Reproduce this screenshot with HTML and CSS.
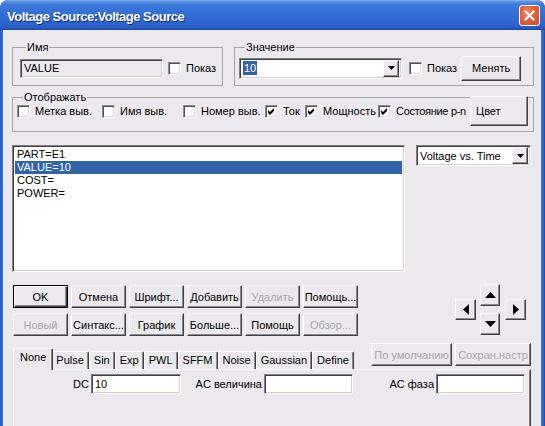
FILE: index.html
```html
<!DOCTYPE html>
<html>
<head>
<meta charset="utf-8">
<link rel="stylesheet" href="styles.css">
</head>
<body>
<div class="window">
  <div class="titlebar">
    <span class="title">Voltage Source:Voltage Source</span>
    <span class="close"><svg width="13" height="13" viewBox="0 0 13 13"><path d="M2.5 2.5 L10.5 10.5 M10.5 2.5 L2.5 10.5" stroke="#fff" stroke-width="2.2" stroke-linecap="square"/></svg></span>
  </div>
  <div class="client">
    <div class="row1">
      <fieldset class="grp grp-name">
        <legend>Имя</legend>
        <div class="grp-row">
          <div class="field field-ro">VALUE</div>
          <label class="cb"><span class="box"></span>Показ</label>
        </div>
      </fieldset>
      <fieldset class="grp grp-value">
        <legend>Значение</legend>
        <div class="grp-row">
          <div class="combo combo-value">
            <span class="combo-text"><span class="hl">10</span></span>
            <span class="combo-btn"><svg width="7" height="4" viewBox="0 0 7 4"><polygon points="0,0 7,0 3.5,4" fill="#000"/></svg></span>
          </div>
          <label class="cb cb-value"><span class="box"></span>Показ</label>
          <span class="btn btn-change">Менять</span>
        </div>
      </fieldset>
    </div>

    <fieldset class="grp grp-show">
      <legend>Отображать</legend>
      <div class="show-row">
        <label class="cb"><span class="box"></span>Метка выв.</label>
        <label class="cb"><span class="box"></span>Имя выв.</label>
        <label class="cb"><span class="box"></span>Номер выв.</label>
        <label class="cb"><span class="box"><svg width="9" height="9" viewBox="0 0 9 9"><polygon points="1,3 3,5 7,1 7,4 3,8 1,6" fill="#000"/></svg></span>Ток</label>
        <label class="cb"><span class="box"><svg width="9" height="9" viewBox="0 0 9 9"><polygon points="1,3 3,5 7,1 7,4 3,8 1,6" fill="#000"/></svg></span>Мощность</label>
        <label class="cb tight"><span class="box"><svg width="9" height="9" viewBox="0 0 9 9"><polygon points="1,3 3,5 7,1 7,4 3,8 1,6" fill="#000"/></svg></span>Состояние p-n</label>
        <span class="btn btn-color">Цвет</span>
      </div>
    </fieldset>

    <div class="row3">
      <div class="list">
        <div class="item">PART=E1</div>
        <div class="item sel">VALUE=10</div>
        <div class="item">COST=</div>
        <div class="item">POWER=</div>
      </div>
      <div class="combo combo-plot">
        <span class="combo-text">Voltage vs. Time</span>
        <span class="combo-btn"><svg width="7" height="4" viewBox="0 0 7 4"><polygon points="0,0 7,0 3.5,4" fill="#000"/></svg></span>
      </div>
    </div>

    <div class="row4">
      <div class="btn-grid">
        <span class="btn btn-default">OK</span>
        <span class="btn">Отмена</span>
        <span class="btn">Шрифт...</span>
        <span class="btn">Добавить</span>
        <span class="btn disabled">Удалить</span>
        <span class="btn">Помощь...</span>
        <span class="btn disabled">Новый</span>
        <span class="btn">Синтакс...</span>
        <span class="btn">График</span>
        <span class="btn">Больше...</span>
        <span class="btn">Помощь</span>
        <span class="btn disabled">Обзор...</span>
      </div>
      <div class="arrows">
        <span class="btn arr arr-side"><svg width="6" height="11" viewBox="0 0 6 11"><polygon points="6,0 6,11 0,5.5" fill="#000"/></svg></span>
        <div class="arr-col">
          <span class="btn arr"><svg width="11" height="6" viewBox="0 0 11 6"><polygon points="5.5,0 11,6 0,6" fill="#000"/></svg></span>
          <span class="btn arr"><svg width="11" height="6" viewBox="0 0 11 6"><polygon points="0,0 11,0 5.5,6" fill="#000"/></svg></span>
        </div>
        <span class="btn arr arr-side"><svg width="6" height="11" viewBox="0 0 6 11"><polygon points="0,0 6,5.5 0,11" fill="#000"/></svg></span>
      </div>
    </div>

    <div class="tabs-area">
      <div class="tab-strip">
        <span class="tab active">None</span>
        <span class="tab">Pulse</span>
        <span class="tab">Sin</span>
        <span class="tab">Exp</span>
        <span class="tab">PWL</span>
        <span class="tab">SFFM</span>
        <span class="tab">Noise</span>
        <span class="tab">Gaussian</span>
        <span class="tab">Define</span>
        <span class="btn disabled tb-btn tb-default">По умолчанию</span>
        <span class="btn disabled tb-btn tb-save">Сохран.настр</span>
      </div>
      <div class="tab-panel">
        <div class="ac-row">
          <span class="lbl">DC</span>
          <div class="field">10</div>
          <span class="lbl">AC величина</span>
          <div class="field"></div>
          <span class="lbl">AC фаза</span>
          <div class="field"></div>
        </div>
      </div>
    </div>
  </div>
</div>
</body>
</html>
```

FILE: styles.css
```css
* { box-sizing: border-box; }

html, body {
  margin: 0;
  padding: 0;
}

body {
  width: 545px;
  height: 426px;
  overflow: hidden;
  background: #fff;
  font-family: "Liberation Sans", Arial, sans-serif;
  font-size: 11px;
  color: #000;
}

.window {
  width: 545px;
  height: 426px;
  display: flex;
  flex-direction: column;
  overflow: hidden;
  border-radius: 8px 8px 0 0;
  background: linear-gradient(to right, #1F4FC0 0, #3A74DC 2px, #2E63CF 3px, #2E63CF 541px, #3A74DC 542px, #1A46B0 545px);
}

/* ---------- title bar ---------- */
.titlebar {
  height: 30px;
  flex: none;
  display: flex;
  align-items: center;
  padding: 0 5px 0 7px;
  border-radius: 8px 8px 0 0;
  background: linear-gradient(to bottom,
    #8DB6F2 0%, #5B93E6 5%, #3E7ADB 14%, #3470D7 40%,
    #2D67D1 70%, #2A5FC8 88%, #2354B8 96%, #1B47A6 100%);
}

.title {
  flex: 1;
  padding-top: 2px;
  color: #fff;
  font-family: "Liberation Sans", Arial, sans-serif;
  font-weight: bold;
  font-size: 13px;
  letter-spacing: -0.5px;
  text-shadow: 1px 1px 0 #0C2C84;
}

.close {
  width: 21px;
  height: 21px;
  display: flex;
  align-items: center;
  justify-content: center;
  border: 1px solid #fff;
  border-radius: 3px;
  background: radial-gradient(circle at 40% 35%, #F08C6A 0%, #E2603C 45%, #C94A22 100%);
}

/* ---------- client ---------- */
.client {
  flex: 1;
  margin: 0 4px 0 3px;
  padding: 11px 0 0 9px;
  background: #EBE9ED;
  overflow: hidden;
}

/* group boxes */
.grp {
  margin: 0;
  min-width: 0;
  border: 1px solid #A6A5AA;
  border-radius: 0;
}

.grp legend {
  margin-left: 6px;
  padding: 0 1px;
  line-height: 13px;
}

.row1 {
  display: flex;
  gap: 11px;
}

.grp-name {
  width: 211px;
  padding: 3px 4px 6px 7px;
}

.grp-value {
  width: 300px;
  padding: 3px 4px 6px 4px;
}

.grp-row {
  height: 22px;
  display: flex;
  align-items: center;
}

.grp-show {
  width: 522px;
  margin-top: 5px;
  padding: 0 4px 13px 4px;
}

.show-row {
  height: 14px;
  display: grid;
  grid-template-columns: 85px 81px 82px 40px 73px 92px 58px;
  align-items: center;
}

/* 3D primitives */
.field {
  height: 20px;
  background: #fff;
  border: 1px solid;
  border-color: #808080 #fff #fff #808080;
  box-shadow: inset 1px 1px 0 #404040, inset -1px -1px 0 #D4D0C8;
  padding: 0 3px;
  line-height: 18px;
  white-space: nowrap;
}

.field-ro {
  width: 143px;
  height: 19px;
  line-height: 17px;
  background: #EBE9ED;
}

.cb {
  display: flex;
  align-items: center;
  white-space: nowrap;
}

.grp-name .cb { margin-left: 5px; }
.cb-value { margin-left: 7px; }

.box {
  width: 13px;
  height: 13px;
  flex: none;
  margin-right: 5px;
  background: #fff;
  border: 1px solid;
  border-color: #8E8D92 #fff #fff #8E8D92;
  box-shadow: inset 1px 1px 0 #505050, inset -1px -1px 0 #DCDAE0;
  display: flex;
  align-items: center;
  justify-content: center;
}

.tight { letter-spacing: -0.3px; }

.btn {
  display: flex;
  align-items: center;
  justify-content: center;
  height: 23px;
  background: #EBE9ED;
  border: 1px solid;
  border-color: #fff #404040 #404040 #fff;
  box-shadow: inset -1px -1px 0 #8A898E;
  white-space: nowrap;
}

.btn.disabled { color: #A7A6AA; }

.btn-default {
  border-color: #000;
  box-shadow: inset 1px 1px 0 #fff, inset -1px -1px 0 #404040, inset -2px -2px 0 #8A898E;
}

.btn-change {
  width: 60px;
  height: 25px;
  margin-left: 4px;
}

.btn-color {
  width: 58px;
  height: 30px;
  margin: -8px 0;
  justify-content: flex-start;
  padding-left: 5px;
}

/* combo boxes */
.combo {
  height: 21px;
  display: flex;
  align-items: center;
  background: #fff;
  border: 1px solid;
  border-color: #808080 #fff #fff #808080;
  box-shadow: inset 1px 1px 0 #404040, inset -1px -1px 0 #D4D0C8;
  padding: 2px 2px 2px 2px;
}

.combo-text {
  flex: 1;
  padding-left: 1px;
  white-space: nowrap;
}

.hl {
  background: #3163AB;
  color: #fff;
  padding: 1px 1px;
}

.combo-btn {
  width: 16px;
  height: 17px;
  display: flex;
  align-items: center;
  justify-content: center;
  background: #EBE9ED;
  border: 1px solid;
  border-color: #fff #404040 #404040 #fff;
  box-shadow: inset -1px -1px 0 #8A898E;
}

.combo-value { width: 163px; }

/* list row */
.row3 {
  display: flex;
  align-items: flex-start;
  margin-top: 13px;
}

.list {
  width: 393px;
  height: 127px;
  background: #fff;
  border: 1px solid;
  border-color: #808080 #fff #fff #808080;
  box-shadow: inset 1px 1px 0 #404040, inset -1px -1px 0 #D4D0C8;
  padding: 2px 2px 0 2px;
}

.item {
  height: 13px;
  line-height: 13px;
  padding-left: 2px;
  white-space: nowrap;
}

.item.sel {
  background: #3163AB;
  color: #fff;
}

.combo-plot {
  width: 115px;
  margin-left: 11px;
}

/* buttons row */
.row4 {
  display: flex;
  align-items: flex-start;
  margin-top: 13px;
}

.btn-grid {
  margin-left: 1px;
  display: grid;
  grid-template-columns: repeat(6, 55px);
  column-gap: 3px;
  row-gap: 5px;
}

.arrows {
  margin-left: auto;
  margin-right: 15px;
  margin-top: -1px;
  display: flex;
  align-items: center;
}

.arr-col {
  display: flex;
  flex-direction: column;
  gap: 7px;
  margin: 0 5px 0 4px;
}

.arr {
  width: 20px;
  height: 22px;
}

.arr-side {
  width: 21px;
  height: 21px;
}

/* tabs */
.tabs-area {
  margin-top: 7px;
  margin-left: 1px;
  width: 518px;
}

.tab-strip {
  height: 26px;
  display: flex;
  align-items: flex-end;
}

.tab {
  height: 18px;
  line-height: 16px;
  padding: 0 4px;
  background: #EBE9ED;
  border-top: 1px solid #fff;
  border-left: 1px solid #fff;
  border-right: 1px solid #404040;
  box-shadow: inset -1px 0 0 #8A898E;
  border-radius: 2px 2px 0 0;
  white-space: nowrap;
}

.tab.active {
  position: relative;
  z-index: 1;
  height: 22px;
  line-height: 17px;
  padding: 0 6px;
  margin-right: -2px;
  margin-bottom: -1px;
}

.tb-btn {
  align-self: flex-start;
  height: 23px;
}

.tb-default {
  width: 81px;
  margin-left: auto;
}

.tb-save {
  width: 76px;
  margin-left: 3px;
}

.tab-panel {
  height: 70px;
  border-top: 1px solid #fff;
  border-left: 1px solid #fff;
  border-right: 1px solid #404040;
  box-shadow: inset -1px 0 0 #8A898E;
  padding-top: 4px;
}

.ac-row {
  display: grid;
  grid-template-columns: 77px 90px 83px 89px 83px 89px;
  align-items: center;
}

.lbl {
  text-align: right;
  padding-right: 2px;
  white-space: nowrap;
}
```
